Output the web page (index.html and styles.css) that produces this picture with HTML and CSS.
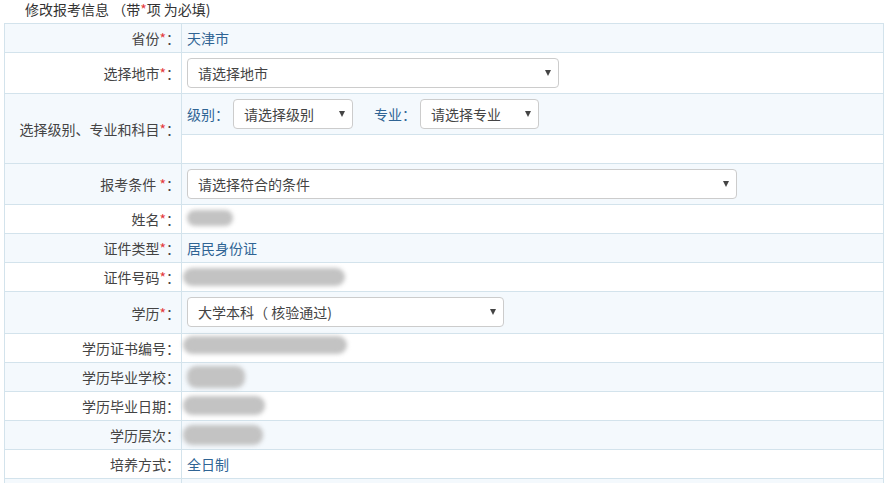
FILE: index.html
```html
<!DOCTYPE html>
<html lang="zh-CN">
<head>
<meta charset="UTF-8">
<title>修改报考信息</title>
<link rel="stylesheet" href="styles.css">
</head>
<body>

<div class="page">
  <div class="form-title">修改报考信息 （带<span class="req">*</span>项 为必填)</div>

  <table class="info-table">
    <tr>
      <td class="label">省份<span class="req">*</span>：</td>
      <td class="value">天津市</td>
    </tr>
    <tr>
      <td class="label">选择地市<span class="req">*</span>：</td>
      <td class="value sel-cell">
        <span class="sel"><select class="w-city"><option>请选择地市</option></select></span>
      </td>
    </tr>
    <tr>
      <td class="label" rowspan="2">选择级别、专业和科目<span class="req">*</span>：</td>
      <td class="value sel-cell">
        <div class="pick-line">
          <span>级别：</span>
          <span class="sel"><select class="w-level"><option>请选择级别</option></select></span>
          <span class="pick-gap">专业：</span>
          <span class="sel"><select class="w-major"><option>请选择专业</option></select></span>
        </div>
      </td>
    </tr>
    <tr>
      <td class="value empty"></td>
    </tr>
    <tr>
      <td class="label">报考条件 <span class="req">*</span>：</td>
      <td class="value sel-cell">
        <span class="sel"><select class="w-cond"><option>请选择符合的条件</option></select></span>
      </td>
    </tr>
    <tr>
      <td class="label">姓名<span class="req">*</span>：</td>
      <td class="value"><span class="blot blot-name"></span></td>
    </tr>
    <tr>
      <td class="label">证件类型<span class="req">*</span>：</td>
      <td class="value">居民身份证</td>
    </tr>
    <tr>
      <td class="label">证件号码<span class="req">*</span>：</td>
      <td class="value"><span class="blot blot-id"></span></td>
    </tr>
    <tr>
      <td class="label">学历<span class="req">*</span>：</td>
      <td class="value sel-cell edu">
        <span class="sel"><select class="w-edu"><option>大学本科（ 核验通过)</option></select></span>
      </td>
    </tr>
    <tr>
      <td class="label">学历证书编号：</td>
      <td class="value"><span class="blot blot-cert"></span></td>
    </tr>
    <tr>
      <td class="label">学历毕业学校：</td>
      <td class="value"><span class="blot blot-school"></span></td>
    </tr>
    <tr>
      <td class="label">学历毕业日期：</td>
      <td class="value"><span class="blot blot-date"></span></td>
    </tr>
    <tr>
      <td class="label">学历层次：</td>
      <td class="value"><span class="blot blot-level"></span></td>
    </tr>
    <tr>
      <td class="label">培养方式：</td>
      <td class="value">全日制</td>
    </tr>
    <tr>
      <td class="label"></td>
      <td class="value"></td>
    </tr>
  </table>
</div>

</body>
</html>
```

FILE: styles.css
```css
body {
  margin: 0;
  font-family: "Noto Sans CJK SC", "Microsoft YaHei", sans-serif;
  font-size: 14px;
  color: #444;
  background: #fff;
}
.page {
  padding: 0 4px;
}
.form-title {
  height: 23px;
  line-height: 18px;
  padding-left: 21px;
  color: #333;
}
.req {
  color: #e4393c;
}

.info-table {
  width: 880px;
  border-collapse: collapse;
  border: 1px solid #d3e3ec;
}
.info-table td {
  border: 1px solid #d3e3ec;
  height: 20px;
  line-height: 20px;
  padding: 4px 0;
}
.info-table tr:nth-child(odd) td {
  background-color: #f4f9fd;
}
.label {
  width: 175px;
  text-align: right;
  padding-right: 1px !important;
  color: #444;
  vertical-align: middle;
}
.value {
  padding-left: 5px !important;
  color: #2f6494;
  vertical-align: middle;
}
.sel-cell {
  padding-top: 5px !important;
  padding-bottom: 5px !important;
}
.edu {
  padding-bottom: 6px !important;
}
.value.empty {
  height: 20px;
}

.pick-line {
  display: flex;
  align-items: center;
}
.pick-line .sel {
  margin-left: 4px;
}
.pick-gap {
  margin-left: 21px;
}

.sel {
  position: relative;
  display: block;
  width: fit-content;
}
.sel select {
  display: block;
  appearance: none;
  -webkit-appearance: none;
  height: 30px;
  border: 1px solid #ccc;
  border-radius: 4px;
  padding: 0 22px 0 10px;
  font-family: inherit;
  font-size: 14px;
  color: #444;
  background: #fff;
}
.sel::after {
  content: "";
  position: absolute;
  right: 8px;
  top: 12px;
  border-left: 3.5px solid transparent;
  border-right: 3.5px solid transparent;
  border-top: 6px solid #444;
  pointer-events: none;
}
.w-city { width: 372px; }
.w-level { width: 120px; }
.w-major { width: 119px; }
.w-cond { width: 550px; }
.w-edu { width: 317px; }

/* blurred private values: kept out of the line box so rows stay 29px */
.blot {
  display: block;
  background: #c3c3c3;
  border-radius: 9px;
  filter: blur(2px);
}
.blot-name { width: 46px; height: 16px; margin: 1px 0 3px; }
.blot-id { width: 162px; height: 18px; margin: 1px 0 1px -4px; }
.blot-cert { width: 164px; height: 18px; margin: -2px 0 4px -4px; }
.blot-school { width: 58px; height: 22px; margin: -1px 0 -1px; }
.blot-date { width: 82px; height: 19px; margin: 0 0 1px -4px; }
.blot-level { width: 80px; height: 20px; margin: 0 0 0 -4px; }
```
